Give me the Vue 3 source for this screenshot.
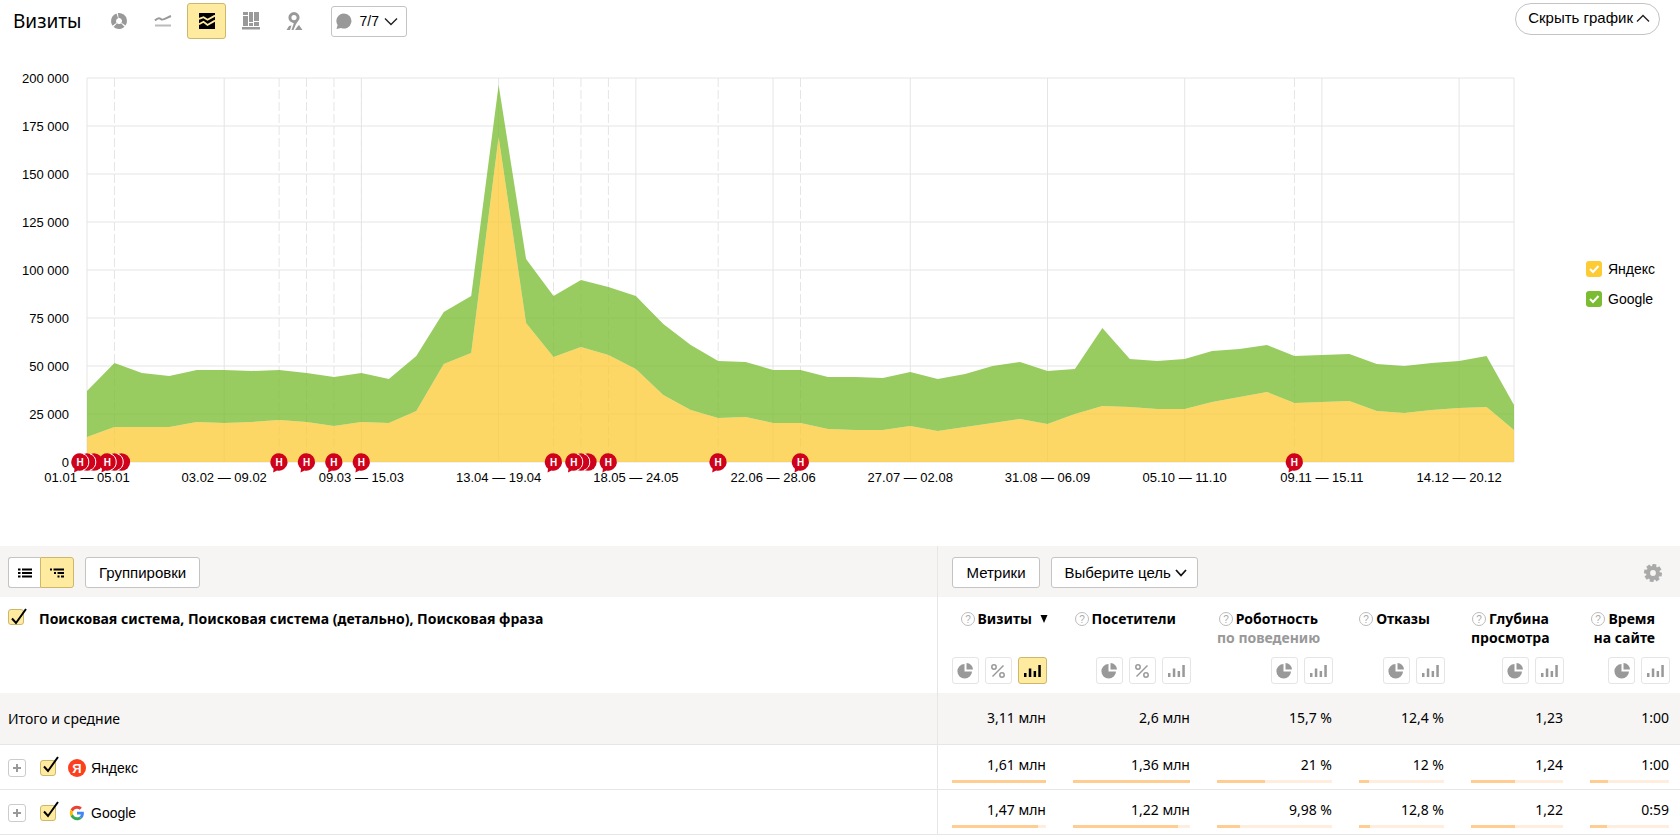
<script setup>
import { ref, computed } from 'vue'

const PLOT_HEIGHT = 384
const LAST_WEEK = 52

// Heights of the stacked series above the axis, one per week, in plot units.
const total = [
  71, 99, 89, 86, 92, 92, 91, 92, 89, 85, 89, 83, 106, 150, 166, 377, 203, 166, 182, 175,
  166, 138, 117, 101, 100, 92, 92, 85, 85, 84, 90, 83, 88, 96, 100, 91, 93, 134, 103, 101,
  103, 111, 113, 117, 106, 107, 108, 98, 96, 99, 101, 106, 57
]
const yandex = [
  25, 35, 35, 35, 40, 39, 40, 42, 40, 36, 40, 39, 51, 98, 109, 325, 139, 105, 115, 107,
  93, 67, 52, 44, 45, 39, 39, 33, 32, 32, 36, 31, 35, 39, 43, 38, 48, 56, 55, 53,
  53, 60, 65, 70, 59, 60, 61, 51, 49, 52, 54, 55, 32
]

const pct = (week) => `${(week / LAST_WEEK) * 100}%`
const points = (series) => series.map((v, i) => `${i},${PLOT_HEIGHT - v}`)
const base = Array(LAST_WEEK + 1).fill(0)
const band = (upper, lower) => [...points(upper), ...points(lower).reverse()].join(' ')

const showYandex = ref(true)
const showGoogle = ref(true)
const yandexBand = computed(() => band(yandex, base))
const googleBand = computed(() => band(total, yandex))

const yTicks = ['200 000', '175 000', '150 000', '125 000', '100 000', '75 000', '50 000', '25 000', '0']
  .map((text, i) => ({ text, y: i * 48 }))
const xTicks = [
  '01.01 — 05.01', '03.02 — 09.02', '09.03 — 15.03', '13.04 — 19.04', '18.05 — 24.05', '22.06 — 28.06',
  '27.07 — 02.08', '31.08 — 06.09', '05.10 — 11.10', '09.11 — 15.11', '14.12 — 20.12'
].map((text, i) => ({ text, week: i * 5 }))

const notes = [
  { week: 0, stacked: true }, { week: 1, stacked: true }, { week: 7 }, { week: 8 }, { week: 9 }, { week: 10 },
  { week: 17 }, { week: 18, stacked: true }, { week: 19 }, { week: 23 }, { week: 26 }, { week: 44 }
]

const metrics = [
  { title: 'Визиты', sorted: true, tools: ['pie', 'percent', 'bars'], active: 'bars' },
  { title: 'Посетители', tools: ['pie', 'percent', 'bars'] },
  { title: 'Роботность', second: 'по поведению', muted: true, tools: ['pie', 'bars'] },
  { title: 'Отказы', tools: ['pie', 'bars'] },
  { title: 'Глубина', second: 'просмотра', tools: ['pie', 'bars'] },
  { title: 'Время', second: 'на сайте', tools: ['pie', 'bars'] }
]
const toolNames = { pie: 'Круговая диаграмма', percent: 'Проценты', bars: 'Столбцы' }
const totals = ['3,11 млн', '2,6 млн', '15,7 %', '12,4 %', '1,23', '1:00']
const rows = ref([
  {
    name: 'Яндекс', logo: 'yandex', checked: true,
    cells: [['1,61 млн', 100], ['1,36 млн', 100], ['21 %', 42], ['12 %', 12], ['1,24', 48], ['1:00', 23]]
  },
  {
    name: 'Google', logo: 'google', checked: true,
    cells: [['1,47 млн', 91], ['1,22 млн', 90], ['9,98 %', 20], ['12,8 %', 13], ['1,22', 48], ['0:59', 21]]
  }
])
const allChecked = ref(true)
</script>

<template>
  <main class="page">
    <header class="head">
      <h1>Визиты</h1>
      <div class="kinds">
        <button class="kind" aria-label="Круговая диаграмма">
          <svg width="18" height="18" viewBox="-9 -9 18 18">
            <circle r="5.500" fill="none" stroke="#999" stroke-width="5" pathLength="100" stroke-dasharray="37 3 24 3 30 3" transform="rotate(-98)" />
          </svg>
        </button>
        <button class="kind" aria-label="Линии">
          <svg width="18" height="18" viewBox="0 0 18 18">
            <path d="M1 8.500C4 5.500 6 6 7.500 7.500C9.500 8.500 13 5.500 17 4" fill="none" stroke="#999" stroke-width="2" />
            <path d="M1 13.500H17" stroke="#bbb" stroke-width="2" />
          </svg>
        </button>
        <button class="kind on" aria-label="Области">
          <svg width="18" height="18" viewBox="0 0 18 18">
            <path d="M1 1H17V17H1Z" fill="#000" />
            <path d="M1 6.800L5.500 5.200L9.500 7.800L17 3.600M1 12.200L5.500 9.800L9.500 13L17 8.600" fill="none" stroke="#ffeba0" stroke-width="1.800" />
          </svg>
        </button>
        <button class="kind" aria-label="Столбцы">
          <svg width="18" height="18" viewBox="0 0 18 18">
            <path d="M1 0H6V3H1ZM1 4H6V14H1ZM7 0H11V10H7ZM7 11H11V14H7ZM12 0H17V9H12ZM12 10H17V14H12ZM0 15H18V17.500H0Z" fill="#999" />
          </svg>
        </button>
        <button class="kind" aria-label="Карта">
          <svg width="18" height="20" viewBox="0 0 18 20">
            <path fill-rule="evenodd" d="M8 1A5.600 5.600 0 0 1 13.600 6.600C13.600 9.500 11 11 9.800 13.500L7.500 19H5.500L7.800 12.200C4.500 11.500 2.400 9.500 2.400 6.600A5.600 5.600 0 0 1 8 1ZM8 4A2.600 2.600 0 1 0 8 9.200A2.600 2.600 0 1 0 8 4Z" fill="#999" />
            <path d="M0.500 19L3 15L5.500 14.500L4 19ZM9 19L11.500 15.500L13 14L16.500 19Z" fill="#999" />
          </svg>
        </button>
      </div>
      <button class="btn notes-btn">
        <svg width="18" height="18" viewBox="0 0 18 18">
          <path d="M9 1.500A7.500 7.500 0 1 1 6 15.900L1.500 17L2.600 13A7.500 7.500 0 0 1 9 1.500Z" fill="#999" />
        </svg>
        <span>7/7</span>
        <svg width="14" height="9" viewBox="0 0 14 9"><path d="M1 1.500L7 7.500L13 1.500" fill="none" stroke="#222" stroke-width="1.400" /></svg>
      </button>
      <button class="hide-btn">
        <span>Скрыть график</span>
        <svg width="14" height="9" viewBox="0 0 14 9"><path d="M1 7.500L7 1.500L13 7.500" fill="none" stroke="#222" stroke-width="1.400" /></svg>
      </button>
    </header>

    <section class="chart">
      <svg class="plot" width="100%" :height="PLOT_HEIGHT" role="img" aria-label="Визиты по неделям">
        <line v-for="t in yTicks" :key="t.y" class="grid" x1="0" x2="100%" :y1="t.y" :y2="t.y" />
        <line v-for="t in xTicks" :key="t.week" class="grid" :x1="pct(t.week)" :x2="pct(t.week)" y1="0" y2="100%" />
        <line class="grid" x1="100%" x2="100%" y1="0" y2="100%" />
        <template v-for="n in notes" :key="n.week">
          <line v-if="n.week" class="grid dashed" :x1="pct(n.week)" :x2="pct(n.week)" y1="0" y2="100%" />
        </template>
        <svg width="100%" height="100%" :viewBox="`0 0 ${LAST_WEEK} ${PLOT_HEIGHT}`" preserveAspectRatio="none">
          <polygon v-if="showYandex" :points="yandexBand" fill="#fdcb34" fill-opacity=".76" />
          <polygon v-if="showGoogle" :points="googleBand" fill="#7bbc33" fill-opacity=".78" />
        </svg>
        <text v-for="t in yTicks" :key="t.text" x="-18" :y="t.y + 5" text-anchor="end">{{ t.text }}</text>
        <text v-for="t in xTicks" :key="t.text" :x="pct(t.week)" y="404" text-anchor="middle">{{ t.text }}</text>
        <svg v-for="n in notes" :key="n.week" class="note" :x="pct(n.week)" :y="PLOT_HEIGHT">
          <g :transform="n.stacked ? 'translate(-7 0)' : ''" fill="#d0021b">
            <template v-if="n.stacked">
              <circle cx="14" r="8.700" />
              <circle cx="7" r="8.700" />
              <path d="M10 -8.200A8.700 8.700 0 0 1 10 8.200" fill="none" stroke="#fff" />
            </template>
            <path d="M0 -8.700A8.700 8.700 0 1 1 -2 8.500L-6 10.500L-5.500 6.700A8.700 8.700 0 0 1 0 -8.700Z" />
            <path v-if="n.stacked" d="M3 -8.200A8.700 8.700 0 0 1 3 8.200" fill="none" stroke="#fff" />
            <text class="note-letter" y="4" text-anchor="middle">Н</text>
          </g>
        </svg>
      </svg>
      <div class="legend">
        <label>
          <span class="swatch yellow"><input v-model="showYandex" type="checkbox" /><svg width="16" height="16" viewBox="0 0 16 16"><path d="M4 8L7 11L12.500 5" /></svg></span>
          Яндекс
        </label>
        <label>
          <span class="swatch green"><input v-model="showGoogle" type="checkbox" /><svg width="16" height="16" viewBox="0 0 16 16"><path d="M4 8L7 11L12.500 5" /></svg></span>
          Google
        </label>
      </div>
    </section>

    <table class="report">
      <colgroup>
        <col />
        <col class="w1" /><col class="w2" /><col class="w3" /><col class="w4" /><col class="w5" /><col class="w6" />
      </colgroup>
      <thead>
        <tr class="bar">
          <td>
            <div class="tools">
              <div class="switch">
                <button aria-label="Список">
                  <svg width="14" height="10" viewBox="0 0 14 10"><path d="M0 1.500H2.500M4 1.500H14M0 5H2.500M4 5H14M0 8.500H2.500M4 8.500H14" stroke="#000" stroke-width="2.200" /></svg>
                </button>
                <button class="on" aria-label="Дерево">
                  <svg width="14" height="10" viewBox="0 0 14 10"><path d="M0 1.500H2M3.500 1.500H14M4 5H6M7.500 5H14M7.500 8.500H9.500M11 8.500H14" stroke="#000" stroke-width="2.200" /></svg>
                </button>
              </div>
              <button class="btn">Группировки</button>
            </div>
          </td>
          <td class="first" colspan="6">
            <div class="tools">
              <button class="btn">Метрики</button>
              <button class="btn goal">
                <span>Выберите цель</span>
                <svg width="12" height="8" viewBox="0 0 12 8"><path d="M1 1L6 6.500L11 1" fill="none" stroke="#111" stroke-width="1.800" /></svg>
              </button>
              <button class="gear" aria-label="Настройки">
                <svg width="18" height="18" viewBox="-9 -9 18 18">
                  <circle r="4.900" fill="none" stroke="#aaa" stroke-width="4" />
                  <path v-for="a in 8" :key="a" :transform="`rotate(${a * 45 + 10})`" d="M-2.200 -6L-1.900 -9H1.900L2.200 -6Z" fill="#aaa" />
                </svg>
              </button>
            </div>
          </td>
        </tr>
        <tr class="titles">
          <th scope="col">
            <label class="group">
              <span class="tick"><input v-model="allChecked" type="checkbox" /><svg width="20" height="20" viewBox="0 0 20 20"><path d="M4 10.500L8 15L18 1" /></svg></span>
              Поисковая система, Поисковая система (детально), Поисковая фраза
            </label>
          </th>
          <th v-for="(m, i) in metrics" :key="m.title" scope="col" :class="{ first: i === 0 }">
            <div class="name">
              <svg class="help" width="14" height="14" viewBox="0 0 14 14">
                <circle cx="7" cy="7" r="6.500" fill="none" stroke="#bbb" />
                <text x="7" y="10.500" text-anchor="middle">?</text>
              </svg>
              <span>{{ m.title }}</span>
              <svg v-if="m.sorted" class="sort" width="8" height="8" viewBox="0 0 8 8"><path d="M0.500 0H7.500L4 8Z" /></svg>
            </div>
            <div class="second" :class="{ muted: m.muted }">{{ m.second }}</div>
            <div class="views">
              <button v-for="t in m.tools" :key="t" class="view" :class="[t, { on: m.active === t }]" :aria-label="toolNames[t]">
                <svg v-if="t === 'pie'" width="16" height="16" viewBox="0 0 16 16">
                  <path d="M7.500 1V8.500H15A7.300 7.300 0 1 1 7.500 1Z" /><path d="M9.500 0A6.600 6.600 0 0 1 16 6.500H9.500Z" />
                </svg>
                <svg v-else-if="t === 'percent'" width="14" height="14" viewBox="0 0 14 14" class="lined">
                  <circle cx="3" cy="3" r="2.200" /><circle cx="11" cy="11" r="2.200" /><path d="M12.500 1.500L1.500 12.500" />
                </svg>
                <svg v-else width="17" height="12" viewBox="0 0 17 12">
                  <path d="M0 8H2.500V12H0ZM4.800 3.500H7.300V12H4.800ZM9.600 6H12.100V12H9.600ZM14.300 0H16.800V12H14.300Z" />
                </svg>
              </button>
            </div>
          </th>
        </tr>
      </thead>
      <tbody>
        <tr class="sum">
          <th scope="row">Итого и средние</th>
          <td v-for="(v, i) in totals" :key="i" :class="{ first: i === 0 }">{{ v }}</td>
        </tr>
        <tr v-for="r in rows" :key="r.name" class="item">
          <th scope="row">
            <div class="engine">
              <button class="plus" :aria-label="`Раскрыть ${r.name}`">
                <svg width="10" height="10" viewBox="0 0 10 10"><path d="M5 1V9M1 5H9" stroke="#999" stroke-width="2" /></svg>
              </button>
              <label>
                <span class="tick"><input v-model="r.checked" type="checkbox" /><svg width="20" height="20" viewBox="0 0 20 20"><path d="M4 10.500L8 15L18 1" /></svg></span>
                <svg v-if="r.logo === 'yandex'" width="18" height="18" viewBox="0 0 18 18">
                  <circle cx="9" cy="9" r="9" fill="#fc3f1d" />
                  <text class="ya" x="9" y="14" text-anchor="middle">Я</text>
                </svg>
                <svg v-else width="18" height="18" viewBox="-6 -6 60 60">
                  <path fill="#EA4335" d="M24 9.500c3.540 0 6.710 1.220 9.210 3.600l6.850-6.850C35.900 2.380 30.470 0 24 0 14.620 0 6.510 5.380 2.560 13.220l7.980 6.190C12.430 13.720 17.740 9.500 24 9.500z" />
                  <path fill="#4285F4" d="M46.980 24.550c0-1.570-.15-3.090-.38-4.550H24v9.020h12.940c-.58 2.960-2.260 5.480-4.780 7.180l7.730 6c4.510-4.180 7.090-10.360 7.090-17.650z" />
                  <path fill="#FBBC05" d="M10.530 28.590c-.48-1.450-.76-2.990-.76-4.590s.27-3.140.76-4.590l-7.980-6.190C.92 16.460 0 20.120 0 24c0 3.880.92 7.540 2.560 10.780l7.970-6.190z" />
                  <path fill="#34A853" d="M24 48c6.480 0 11.930-2.130 15.890-5.810l-7.730-6c-2.150 1.450-4.920 2.300-8.160 2.300-6.260 0-11.570-4.220-13.470-9.910l-7.980 6.190C6.510 42.620 14.620 48 24 48z" />
                </svg>
                <span>{{ r.name }}</span>
              </label>
            </div>
          </th>
          <td v-for="([v, share], i) in r.cells" :key="i" :class="{ first: i === 0 }">
            {{ v }}
            <div class="share"><div :style="{ width: share + '%' }"></div></div>
          </td>
        </tr>
      </tbody>
    </table>
  </main>
</template>

<style>
body {
  margin: 0;
  background: #fff;
}
</style>

<style scoped>
.page {
  font: 14px/20px "Liberation Sans", Arial, sans-serif;
  color: #000;
}
button {
  font: inherit;
  color: inherit;
  margin: 0;
  padding: 0;
  box-sizing: border-box;
  cursor: pointer;
}
svg {
  display: block;
  flex: none;
}
.head {
  display: flex;
  align-items: center;
  height: 42px;
  padding: 0 20px 0 13px;
}
h1 {
  margin: 0 18px 0 0;
  font: 400 19px/24px "Noto Sans", sans-serif;
}
.kinds {
  display: flex;
  gap: 5px;
}
.kind {
  display: flex;
  align-items: center;
  justify-content: center;
  width: 39px;
  height: 36px;
  background: none;
  border: 1px solid transparent;
  border-radius: 3px;
}
.kind.on,
.view.on,
.switch .on {
  background: #ffeba0;
  border-color: #ccb86c;
}
.btn {
  height: 31px;
  padding: 0 13px;
  background: #fff;
  border: 1px solid #c4c4c4;
  border-radius: 3px;
}
.notes-btn {
  display: flex;
  align-items: center;
  margin-left: 17px;
  padding: 0 8px 0 3px;
}
.notes-btn span {
  margin: 0 5px 0 6px;
}
.hide-btn {
  display: flex;
  align-items: center;
  align-self: flex-start;
  gap: 3px;
  height: 32px;
  margin: 3px 0 0 auto;
  padding: 0 9px 2px 12px;
  font-size: 15px;
  background: #fff;
  border: 1px solid #c4c4c4;
  border-radius: 16px;
}
.chart {
  display: flex;
  padding: 36px 18px 84px 87px;
}
.plot {
  flex: 1;
  min-width: 0;
  overflow: visible;
}
.plot text {
  font-size: 13px;
}
.grid {
  stroke: #e5e5e5;
  stroke-width: 1;
}
.dashed {
  stroke-dasharray: 9 3;
}
.note {
  overflow: visible;
}
.plot .note-letter {
  fill: #fff;
  font: 700 10px "Liberation Sans", Arial, sans-serif;
}
.legend {
  display: flex;
  flex-direction: column;
  gap: 10px;
  width: 76px;
  padding: 181px 0 0 72px;
}
.legend label {
  display: flex;
  align-items: center;
  gap: 6px;
}
.swatch,
.tick {
  position: relative;
  flex: none;
}
.swatch input,
.tick input {
  display: block;
  appearance: none;
  width: 16px;
  height: 16px;
  margin: 0;
  border-radius: 3px;
}
.yellow input {
  background: #fdcb34;
}
.green input {
  background: #7bbc33;
}
.swatch svg,
.tick svg {
  position: absolute;
  left: 0;
  bottom: 0;
  fill: none;
  stroke: #fff;
  stroke-width: 2;
  pointer-events: none;
}
.tick input {
  box-sizing: border-box;
  background: #ffeba0;
  border: 1px solid #ccb86c;
}
.tick svg {
  stroke: #000;
}
input:not(:checked) + svg {
  display: none;
}
.report {
  width: 100%;
  table-layout: fixed;
  border-collapse: collapse;
  font-family: "Noto Sans", "Open Sans", sans-serif;
}
.w1 { width: 122px; }
.w2 { width: 144px; }
.w3 { width: 142px; }
.w4 { width: 112px; }
.w5 { width: 119px; }
.w6 { width: 103px; }
.report th,
.report td {
  padding: 0 14px 0 13px;
  text-align: right;
  vertical-align: top;
}
.report th:last-child,
.report td:last-child {
  padding-right: 11px;
}
.report th:first-child,
.report td:first-child {
  padding-left: 8px;
  text-align: left;
}
.report .first {
  border-left: 1px solid #e6e6e6;
  padding-left: 14px;
}
.bar,
.sum {
  background: #f6f5f3;
}
.tools {
  display: flex;
  align-items: center;
  box-sizing: border-box;
  height: 51px;
  padding-top: 2px;
  gap: 11px;
  font: 15px/20px "Liberation Sans", Arial, sans-serif;
}
.switch {
  display: flex;
}
.switch button {
  display: flex;
  align-items: center;
  justify-content: center;
  width: 32px;
  height: 31px;
  background: #fff;
  border: 1px solid #c4c4c4;
  border-right: 0;
  border-radius: 3px 0 0 3px;
}
.switch .on {
  width: 34px;
  background: #ffeba0;
  border: 1px solid #ccb86c;
  border-radius: 0 3px 3px 0;
}
.goal {
  display: flex;
  align-items: center;
  gap: 4px;
  padding: 0 10px 0 13px;
}
.gear {
  margin: 0 7px 0 auto;
  background: none;
  border: 0;
}
.titles th {
  height: 96px;
  font-weight: 700;
  line-height: 19px;
}
.group {
  display: flex;
  gap: 15px;
  padding-top: 12px;
}
.name {
  display: flex;
  align-items: center;
  justify-content: flex-end;
  gap: 3px;
  padding: 12px 14px 0 0;
  white-space: nowrap;
}
.titles .first .name {
  margin-right: -2px;
  padding-right: 0;
}
.sort {
  margin-left: 5px;
}
.help text {
  fill: #aaa;
  font: 10px "Liberation Sans", Arial, sans-serif;
}
.second {
  height: 19px;
  padding-right: 14px;
  white-space: nowrap;
}
.muted {
  color: #999;
}
.views {
  display: flex;
  justify-content: flex-end;
  gap: 6px;
  margin: 10px -1px 0 0;
}
.view {
  display: flex;
  flex: none;
  align-items: center;
  justify-content: center;
  width: 27px;
  height: 27px;
  background: #fff;
  border: 1px solid #e5e5e5;
  border-radius: 3px;
  fill: #999;
}
.view.bars {
  width: 29px;
}
.view.on {
  fill: #000;
}
.lined {
  fill: none;
  stroke: #999;
  stroke-width: 1.5;
}
.report .sum th,
.report .sum td {
  height: 51px;
  line-height: 50px;
  font-weight: 400;
}
.report .sum th {
  box-sizing: border-box;
  padding-top: 1px;
}
.item,
.sum {
  border-bottom: 1px solid #e6e6e6;
}
.item th {
  font-weight: 400;
}
.report .item td {
  box-sizing: border-box;
  height: 44px;
  padding-top: 10px;
}
.share {
  height: 3px;
  margin-top: 5px;
  background: #ffeedd;
}
.share div {
  height: 3px;
  background: #ffcc91;
}
.engine {
  display: flex;
  align-items: center;
  gap: 14px;
  box-sizing: border-box;
  height: 44px;
  padding-top: 2px;
  font-family: "Liberation Sans", Arial, sans-serif;
}
.engine label {
  display: flex;
  align-items: center;
}
.engine .tick {
  margin-right: 12px;
}
.engine label span:last-child {
  margin-left: 5px;
}
.plus {
  display: flex;
  align-items: center;
  justify-content: center;
  width: 18px;
  height: 18px;
  background: #fff;
  border: 1px solid #ccc;
  border-radius: 3px;
}
.ya {
  fill: #fff;
  font: 700 13px "Liberation Sans", Arial, sans-serif;
}
</style>
